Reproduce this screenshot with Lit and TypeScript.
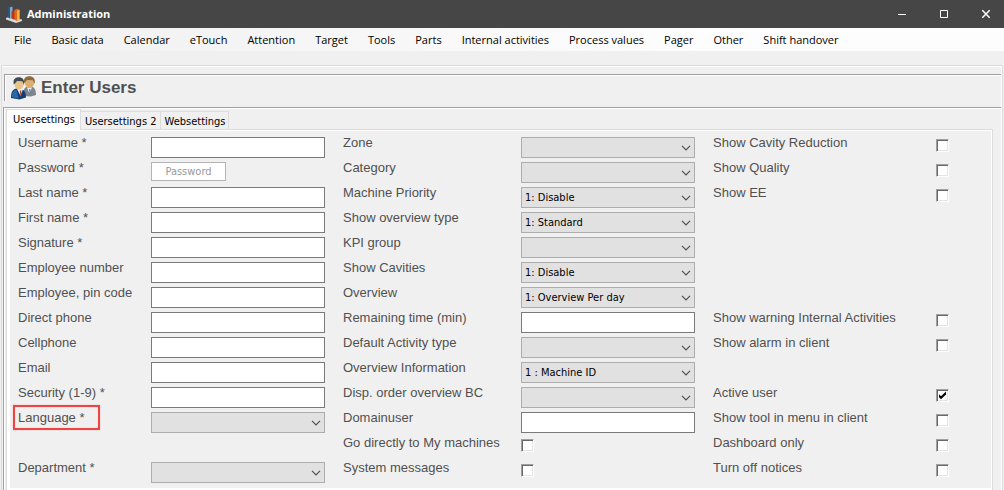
import { LitElement, html, css } from "lit";
import { customElement, property, state } from "lit/decorators.js";
import { classMap } from "lit/directives/class-map.js";

type Kind = "text" | "select" | "check" | "button";

interface Field {
  label: string;
  kind: Kind;
  value?: string;
  checked?: boolean;
  marked?: boolean;
}

const MENU = [
  "File", "Basic data", "Calendar", "eTouch", "Attention", "Target", "Tools", "Parts",
  "Internal activities", "Process values", "Pager", "Other", "Shift handover",
];

const TABS = ["Usersettings", "Usersettings 2", "Websettings"];

const PERSON: (Field | null)[] = [
  { label: "Username *", kind: "text" },
  { label: "Password *", kind: "button", value: "Password" },
  { label: "Last name *", kind: "text" },
  { label: "First name *", kind: "text" },
  { label: "Signature *", kind: "text" },
  { label: "Employee number", kind: "text" },
  { label: "Employee, pin code", kind: "text" },
  { label: "Direct phone", kind: "text" },
  { label: "Cellphone", kind: "text" },
  { label: "Email", kind: "text" },
  { label: "Security (1-9) *", kind: "text" },
  { label: "Language *", kind: "select", marked: true },
  null,
  { label: "Department *", kind: "select" },
];

const OVERVIEW: (Field | null)[] = [
  { label: "Zone", kind: "select" },
  { label: "Category", kind: "select" },
  { label: "Machine Priority", kind: "select", value: "1: Disable" },
  { label: "Show overview type", kind: "select", value: "1: Standard" },
  { label: "KPI group", kind: "select" },
  { label: "Show Cavities", kind: "select", value: "1: Disable" },
  { label: "Overview", kind: "select", value: "1: Overview Per day" },
  { label: "Remaining time (min)", kind: "text" },
  { label: "Default Activity type", kind: "select" },
  { label: "Overview Information", kind: "select", value: "1 : Machine ID" },
  { label: "Disp. order overview BC", kind: "select" },
  { label: "Domainuser", kind: "text" },
  { label: "Go directly to My machines", kind: "check" },
  { label: "System messages", kind: "check" },
];

const FLAGS: (Field | null)[] = [
  { label: "Show Cavity Reduction", kind: "check" },
  { label: "Show Quality", kind: "check" },
  { label: "Show EE", kind: "check" },
  null,
  null,
  null,
  null,
  { label: "Show warning Internal Activities", kind: "check" },
  { label: "Show alarm in client", kind: "check" },
  null,
  { label: "Active user", kind: "check", checked: true },
  { label: "Show tool in menu in client", kind: "check" },
  { label: "Dashboard only", kind: "check" },
  { label: "Turn off notices", kind: "check" },
];

@customElement("form-row")
class FormRow extends LitElement {
  @property({ attribute: false }) field!: Field;

  static styles = css`
    :host {
      display: grid;
      grid-template-columns: var(--label-width) 1fr;
      align-items: start;
      height: 25px;
      font-family: "DejaVu Sans Condensed", "DejaVu Sans", sans-serif;
      font-size: 11px;
    }
    .label {
      justify-self: start;
      font: 13px/16px "Liberation Sans", Arial, sans-serif;
      color: #505050;
      white-space: nowrap;
    }
    .marked {
      position: relative;
    }
    .marked::before {
      content: "";
      position: absolute;
      inset: -5px -15px -4px -5px;
      border: 2px solid #ee4444;
      box-shadow: 0 0 1px #f79a9a, inset 0 0 1px #f79a9a;
    }
    .text,
    .select {
      box-sizing: border-box;
      width: 100%;
      height: 21px;
      margin: 0;
      border-radius: 0;
      outline: none;
      font: inherit;
      color: #000;
    }
    .text {
      margin-top: 2px;
      padding: 0 3px;
      border: 1px solid #7a7a7a;
      background: #fff;
    }
    .combo {
      display: grid;
      align-items: center;
      margin-top: 2px;
    }
    .select {
      grid-area: 1 / 1;
      appearance: none;
      padding: 0 24px 0 3px;
      border: 1px solid #adadad;
      background: #e1e1e1;
    }
    .chevron {
      grid-area: 1 / 1;
      justify-self: end;
      width: 10px;
      height: 6px;
      margin-right: 4px;
      pointer-events: none;
    }
    .button {
      box-sizing: border-box;
      width: 75px;
      height: 19px;
      margin: 2px 0 0;
      padding: 0;
      border: 1px solid #b4b4b4;
      background: #fff;
      font: inherit;
      color: #999;
    }
    .tick {
      display: grid;
      width: 13px;
      height: 13px;
      margin-top: 4px;
    }
    .box {
      grid-area: 1 / 1;
      appearance: none;
      box-sizing: border-box;
      width: 13px;
      height: 13px;
      margin: 0;
      border: 1px solid;
      border-color: #a0a0a0 #fff #fff #a0a0a0;
      background: #fff;
      box-shadow: inset 1px 1px #696969, inset -1px -1px #e3e3e3;
    }
    .mark {
      grid-area: 1 / 1;
      width: 13px;
      height: 13px;
      visibility: hidden;
      pointer-events: none;
    }
    .box:checked + .mark {
      visibility: visible;
    }
  `;

  private control() {
    const f = this.field;
    switch (f.kind) {
      case "text":
        return html`<input id="control" class="text" type="text" />`;
      case "button":
        return html`<button id="control" class="button" type="button" disabled>${f.value}</button>`;
      case "check":
        return html`<span class="tick">
          <input id="control" class="box" type="checkbox" .checked=${f.checked ?? false} />
          <svg class="mark" viewBox="0 0 13 13" aria-hidden="true">
            <path d="M3 5.200 5 7.200 10 2.600V5.600L5 10.200 3 8.200Z" fill="#000" />
          </svg>
        </span>`;
      default:
        return html`<span class="combo">
          <select id="control" class="select"><option>${f.value ?? ""}</option></select>
          <svg class="chevron" viewBox="0 0 10 6" aria-hidden="true">
            <path d="M1 .8 5 4.800 9 .8" fill="none" stroke="#505050" stroke-width="1.200" />
          </svg>
        </span>`;
    }
  }

  render() {
    return html`
      <label for="control" class=${classMap({ label: true, marked: !!this.field.marked })}>${this.field.label}</label>
      ${this.control()}
    `;
  }
}

@customElement("app-root")
class AppRoot extends LitElement {
  @state() private tab = 0;

  static styles = css`
    :host {
      display: flex;
      flex-direction: column;
      min-height: 100vh;
      box-sizing: border-box;
      background: #f0f0f0;
      font-family: "Open Sans", "Noto Sans", sans-serif;
      color: #000;
    }
    .titlebar {
      display: flex;
      align-items: center;
      height: 28px;
      padding-left: 5px;
      background: #464646;
      color: #fff;
    }
    .logo {
      width: 18px;
      height: 18px;
      margin-right: 4px;
    }
    .title {
      flex: 1;
      font-size: 11px;
      font-weight: 700;
      line-height: 16px;
    }
    .caption {
      display: grid;
      place-items: center;
      width: 42px;
      height: 28px;
      padding: 0;
      border: 0;
      background: none;
      color: #fff;
    }
    .glyph {
      width: 10px;
      height: 10px;
    }
    .captions {
      display: flex;
      margin-right: -3px;
    }
    .menu {
      display: flex;
      align-items: center;
      height: 23px;
      padding-left: 4px;
      background: linear-gradient(90deg, #f0f0f0, #fdfdfd 70%);
    }
    .item {
      padding: 0 10px;
      border: 0;
      background: none;
      font: 11px/18px "Open Sans", "Noto Sans", sans-serif;
      white-space: nowrap;
      color: #000;
    }
    .frame {
      flex: 1;
      display: flex;
      flex-direction: column;
      margin: 14px 1px 0;
      padding: 8px 0 0 1px;
      border: 1px solid #dcdcdc;
      border-bottom: 0;
      box-shadow: inset -1px 1px #fff;
    }
    .heading {
      display: flex;
      align-items: center;
      height: 26px;
      margin: 0 1px 6px;
      padding-left: 6px;
      border: solid #a0a0a0;
      border-width: 1px 0 0 1px;
      box-shadow: inset 1px 1px #fff;
    }
    .people {
      width: 26px;
      height: 24px;
      margin-right: 4px;
    }
    .name {
      margin: 0;
      font: bold 17px/20px "Liberation Sans", Arial, sans-serif;
      color: #505050;
    }
    .pane {
      flex: 1;
      display: flex;
      flex-direction: column;
      margin-right: 1px;
      padding: 1px 8px 0 2px;
      border: solid #a0a0a0;
      border-width: 1px 0 0 1px;
      box-shadow: inset 1px 1px #fff;
    }
    .tabs {
      display: flex;
      align-items: flex-end;
      height: 20px;
      font: 11px/14px "DejaVu Sans Condensed", "DejaVu Sans", sans-serif;
    }
    .tab {
      height: 18px;
      padding: 2px 3px 0 4px;
      border: 1px solid #dcdcdc;
      border-width: 1px 1px 0 0;
      background: #f0f0f0;
      font: inherit;
      color: #000;
      white-space: nowrap;
    }
    .tab.active {
      z-index: 1;
      height: 21px;
      margin-bottom: -1px;
      padding: 0 5px 1px 6px;
      border-left-width: 1px;
      background: #fff;
    }
    .sheet {
      flex: 1;
      display: flex;
      padding: 1px 1px 2px 3px;
      border: 1px solid #dcdcdc;
      border-bottom: 0;
      background: #fff;
    }
    .form {
      flex: 1;
      display: grid;
      grid-template-columns: 307fr 352fr 278fr;
      column-gap: 18px;
      align-content: start;
      padding: 4px 0 3px 8px;
      background: #f0f0f0;
    }
    .column {
      display: grid;
      grid-auto-rows: 25px;
      align-content: start;
    }
    .person {
      --label-width: 133px;
    }
    .overview {
      --label-width: 178px;
    }
    .flags {
      --label-width: 223px;
    }
  `;

  private column(name: string, fields: (Field | null)[]) {
    return html`<div class="column ${name}">
      ${fields.map((f) => (f ? html`<form-row .field=${f}></form-row>` : html`<span></span>`))}
    </div>`;
  }

  render() {
    return html`
      <header class="titlebar">
        <svg class="logo" viewBox="0 0 18 18" aria-hidden="true">
          <path d="M1 13 4 12 17 14.500V16L11 18 1 14.500Z" fill="#d5dbe0" />
          <path d="M3 2 5 1 7.500 1.700V12.500L5 13.500 3 12.500Z" fill="#2f5577" />
          <path d="M5 2.200 7.500 1.700V12.500L5 13.500Z" fill="#86a9c4" />
          <path d="M6.500 6.500 8.500 5.500 10.500 6.200V14L8.500 14.500 6.500 13.500Z" fill="#b8381a" />
          <path d="M9.500 5 12 3.800 14.500 4.800V14.500L12 16 9.500 14.700Z" fill="#e8641c" />
          <path d="M12 5.800 14.500 4.800V14.500L12 16Z" fill="#ffb83e" />
        </svg>
        <span class="title">Administration</span>
        <div class="captions">
          <button class="caption" type="button" aria-label="Minimize">
            <svg class="glyph" viewBox="0 0 10 10"><path d="M1 5.500H9" stroke="#fff" /></svg>
          </button>
          <button class="caption" type="button" aria-label="Maximize">
            <svg class="glyph" viewBox="0 0 10 10"><path d="M1.500 1.500H8.500V8.500H1.500Z" fill="none" stroke="#fff" /></svg>
          </button>
          <button class="caption" type="button" aria-label="Close">
            <svg class="glyph" viewBox="0 0 10 10"><path d="M1.300 1.300 8.700 8.700M8.700 1.300 1.300 8.700" stroke="#fff" stroke-width="1.500" /></svg>
          </button>
        </div>
      </header>
      <nav class="menu">${MENU.map((m) => html`<button class="item" type="button">${m}</button>`)}</nav>
      <main class="frame">
        <div class="heading">
          <svg class="people" viewBox="0 0 26 24" aria-hidden="true">
            <path d="M12 20C12 12.500 14 10.500 18.500 10.500S25 13 25 19L20 20.500Z" fill="#7f868d" />
            <path d="M16 11.500 18.500 17.500 21 11.300Z" fill="#eef2f6" />
            <path d="M18.200 13 19.300 13 19.500 17 18.700 18Z" fill="#46637e" />
            <ellipse cx="18.500" cy="6.800" rx="4.600" ry="5.400" fill="#dcae72" />
            <path d="M13.200 7C12 1.500 15.500 .3 18.500 .3S25 2.500 23.600 8L21.800 4.200 16 4 14.500 6Z" fill="#8b6a3e" />
            <path d="M0 22C0 15 2 12.500 7 12.500S15 15 15 21.500L8.500 23.500Z" fill="#123f73" />
            <path d="M.6 21C1 16 3 14.300 5.500 13.500L7.500 22.500Z" fill="#2a68a6" />
            <path d="M6 12.800 9.500 20 12 13Z" fill="#f4f7fa" />
            <path d="M8.700 14.500 10.200 14.500 10.500 19.500 9.500 20.500Z" fill="#b43b2e" />
            <ellipse cx="8" cy="8" rx="4.600" ry="5.600" fill="#e9c48a" />
            <path d="M2.800 8.500C1.500 2.500 5 1.200 8 1.200S14.200 3.500 13 9L11.300 5.200 6 5 4.500 7Z" fill="#3f4c54" />
          </svg>
          <h1 class="name">Enter Users</h1>
        </div>
        <section class="pane">
          <div class="tabs" role="tablist">
            ${TABS.map(
              (t, i) => html`<button
                type="button"
                role="tab"
                aria-selected=${i === this.tab ? "true" : "false"}
                class=${classMap({ tab: true, active: i === this.tab })}
                @click=${() => (this.tab = i)}
              >${t}</button>`,
            )}
          </div>
          <div class="sheet">
            <form class="form">
              ${this.column("person", PERSON)}
              ${this.column("overview", OVERVIEW)}
              ${this.column("flags", FLAGS)}
            </form>
          </div>
        </section>
      </main>
    `;
  }
}
